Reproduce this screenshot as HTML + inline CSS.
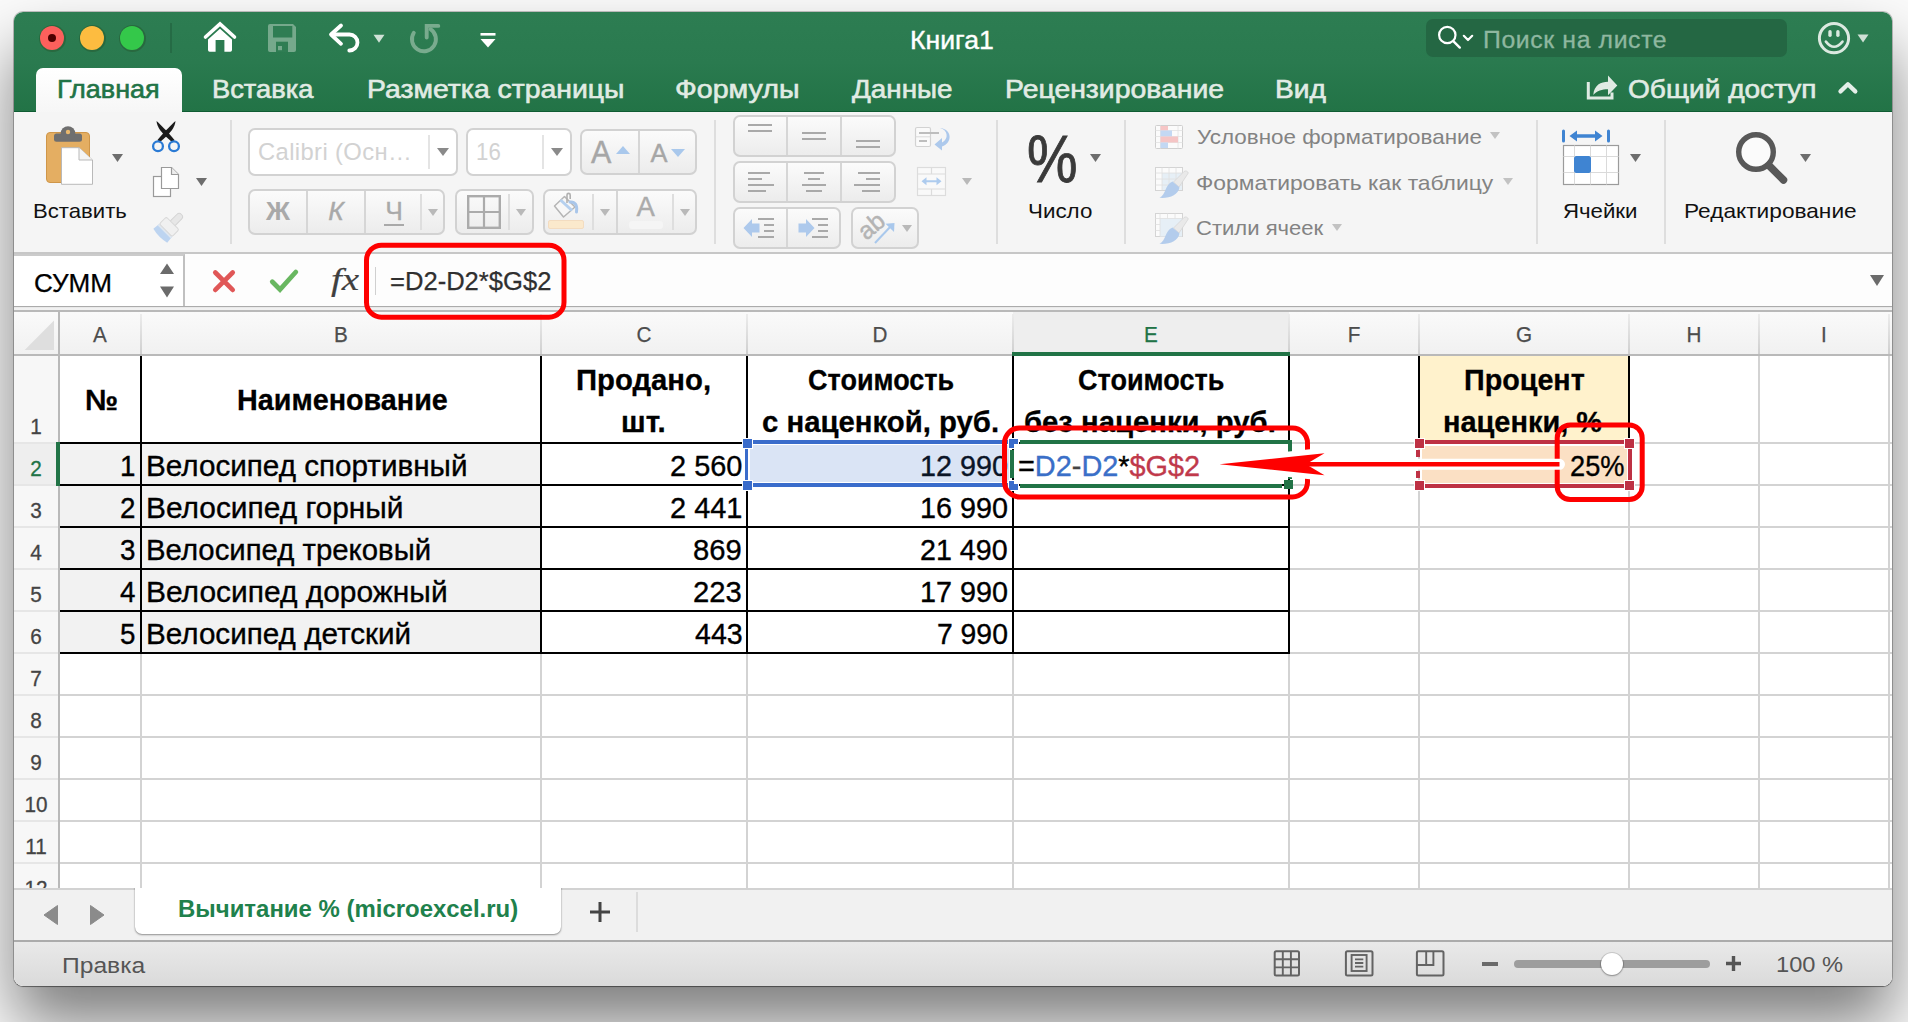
<!DOCTYPE html>
<html lang="ru">
<head>
<meta charset="utf-8">
<title>Книга1</title>
<style>
*{box-sizing:border-box;margin:0;padding:0}
html,body{width:1908px;height:1022px;overflow:hidden}
body{position:relative;background:#fbfbfb;font-family:"Liberation Sans",sans-serif;color:#000}
.a{position:absolute}
#win{position:absolute;left:14px;top:12px;width:1878px;height:974px;border-radius:9px;overflow:hidden;background:#fff}
#shadow{position:absolute;left:14px;top:12px;width:1878px;height:974px;border-radius:9px;
 box-shadow:0 0 0 1px rgba(0,0,0,.22),0 1px 1px 0 rgba(0,0,0,.3),0 38px 64px rgba(0,0,0,.5)}
#c{position:absolute;left:-14px;top:-12px;width:1908px;height:1022px}
.t{position:absolute;white-space:nowrap;line-height:1}
.sx{display:inline-block;white-space:nowrap;transform-origin:0 50%}
/* title */
#title{left:14px;top:12px;width:1878px;height:99px;background:linear-gradient(#2d7d52 0,#2a7a4f 50px,#227346 100px)}
.tab{font-size:26px;color:#e1ebe4;top:75.7px}
/* ribbon */
#ribbon{left:14px;top:112px;width:1878px;height:141px;background:#f5f5f5}
.vsep{position:absolute;width:2px;background:#dedede;top:120px;height:124px}
.box{position:absolute;border:2px solid #d2d2d2;border-radius:7px;background:linear-gradient(#fbfbfb,#ececec)}
.wbox{background:#fff}
.dv{position:absolute;width:2px;background:#d6d6d6}
.lbl{font-size:20.7px;top:201px;color:#111}
.dis{color:#838383;font-size:20.7px}
/* grid */
.hl{position:absolute;height:2px;background:#d3d3d3;left:60px;width:1832px}
.vl{position:absolute;width:2px;background:#d3d3d3;top:356px;height:532px}
.bh{position:absolute;height:2px;background:#000}
.bv{position:absolute;width:2px;background:#000}
.rn{position:absolute;left:14px;width:44px;transform:scaleX(.93);text-align:center;font-size:22.3px;color:#3c3c3c;line-height:1;-webkit-text-stroke:.3px currentColor}
.cn{position:absolute;transform:scaleX(.94);top:325px;font-size:22px;color:#4d4d4d;-webkit-text-stroke:.25px currentColor;line-height:1;text-align:center}
.cell{position:absolute;font-size:27px;line-height:1;white-space:nowrap}
.b{font-weight:bold}
.ct{-webkit-text-stroke:.35px currentColor;margin-top:.7px}
.tab{-webkit-text-stroke:.6px currentColor}
.hd{width:11px;height:11px;border:1px solid #fff;box-sizing:border-box}
</style>
</head>
<body>
<div id="shadow"></div>
<div id="win"><div id="c">

<!-- TITLEBAR -->
<div id="title" class="a"></div>
<!-- traffic lights -->
<div class="a" style="left:38.5px;top:24.5px;width:27px;height:27px;border-radius:50%;background:#28693f"></div>
<div class="a" style="left:40px;top:26px;width:24px;height:24px;border-radius:50%;background:#fc605c"></div>
<div class="a" style="left:48px;top:34px;width:8px;height:8px;border-radius:50%;background:#4d0000"></div>
<div class="a" style="left:78.5px;top:24.5px;width:27px;height:27px;border-radius:50%;background:#28693f"></div>
<div class="a" style="left:80px;top:26px;width:24px;height:24px;border-radius:50%;background:#fdbc40"></div>
<div class="a" style="left:118.5px;top:24.5px;width:27px;height:27px;border-radius:50%;background:#28693f"></div>
<div class="a" style="left:120px;top:26px;width:24px;height:24px;border-radius:50%;background:#34c84a"></div>
<div class="a" style="left:170px;top:23px;width:2px;height:30px;background:#256b45"></div>
<!-- home -->
<svg class="a" style="left:200px;top:18px" width="40" height="38" viewBox="0 0 40 38"><path d="M5.5 19 L20 6 L34.5 19" stroke="#fff" stroke-width="3.6" stroke-linecap="round" stroke-linejoin="miter" fill="none"/><path d="M8 21.5 L20 10.8 L32 21.5 V32 a1.7 1.7 0 0 1 -1.7 1.7 H24.4 V22 H15.6 V33.7 H9.7 a1.7 1.7 0 0 1 -1.7 -1.7 Z" fill="#fff"/></svg>
<!-- save -->
<svg class="a" style="left:266px;top:22px" width="32" height="32" viewBox="0 0 32 32"><path d="M4 2 H27 L30 5 V28 a2 2 0 0 1 -2 2 H4 a2 2 0 0 1 -2 -2 V4 a2 2 0 0 1 2 -2 Z" fill="#76a98c"/><rect x="7" y="4" width="19.3" height="11.5" fill="#2f7d53"/><rect x="10" y="19.7" width="12" height="10.3" fill="#2f7d53"/><rect x="12" y="24" width="4" height="4.2" fill="#76a98c"/></svg>
<!-- undo -->
<svg class="a" style="left:326px;top:20px" width="40" height="36" viewBox="0 0 40 36"><path d="M15 5.5 L5 14.5 L15 23.8" stroke="#fff" stroke-width="3.8" fill="none" stroke-linecap="round" stroke-linejoin="round"/><path d="M6 14.5 H23.5 a8 8 0 0 1 0 16 H23.3" stroke="#fff" stroke-width="3.8" fill="none" stroke-linecap="round"/></svg>
<svg class="a" style="left:373px;top:34px" width="12" height="9" viewBox="0 0 12 9"><path d="M0.5 0.8 H11.5 L6 8.8 Z" fill="#cfe1d6"/></svg>
<!-- redo -->
<svg class="a" style="left:406px;top:20px" width="38" height="36" viewBox="0 0 38 36"><path d="M7.8 12.8 A12 12 0 1 0 24.5 9.2" stroke="#79ab8e" stroke-width="3.9" fill="none" stroke-linecap="round"/><path d="M32.3 5.9 H20.7 V17.5" stroke="#79ab8e" stroke-width="3.9" fill="none" stroke-linecap="round" stroke-linejoin="miter"/></svg>
<!-- customize -->
<svg class="a" style="left:479px;top:31px" width="18" height="18" viewBox="0 0 18 18"><rect x="1.5" y="2" width="15" height="2.6" fill="#fff"/><path d="M1.5 8 H16.5 L9 16.5 Z" fill="#fff"/></svg>
<!-- title text -->
<div class="t" id="tt" style="left:909.75px;top:26.50px;font-size:26px;color:#fff;-webkit-text-stroke:.4px #fff"><span class="sx" style="transform:scaleX(1.0239)">Книга1</span></div>
<!-- search -->
<div class="a" style="left:1426px;top:19px;width:361px;height:38px;border-radius:7px;background:#246743"></div>
<svg class="a" style="left:1435px;top:24px" width="40" height="28" viewBox="0 0 40 28"><circle cx="12.300" cy="11" r="8.200" stroke="#fff" stroke-width="2.200" fill="none"/><path d="M18.300 17.200 L24.800 23.600" stroke="#fff" stroke-width="2.400" stroke-linecap="round"/><path d="M28.800 11.800 L33 16 L37.200 11.800" stroke="#fff" stroke-width="2.200" fill="none" stroke-linecap="round" stroke-linejoin="round"/></svg>
<div class="t" id="srch" style="left:1483.15px;top:29.01px;font-size:23.5px;color:#8fb7a0;letter-spacing:.6px;-webkit-text-stroke:.3px #8fb7a0"><span class="sx" style="transform:scaleX(1.0542)">Поиск на листе</span></div>
<!-- smiley -->
<svg class="a" style="left:1816px;top:20px" width="36" height="36" viewBox="0 0 36 36"><circle cx="18" cy="18.200" r="14.600" stroke="#dbe9e0" stroke-width="3" fill="none"/><rect x="12.300" y="10" width="3.400" height="7" rx="1.700" fill="#dbe9e0"/><rect x="20.200" y="10" width="3.400" height="7" rx="1.700" fill="#dbe9e0"/><path d="M9.900 21.600 Q18 32 26.500 21.600" stroke="#dbe9e0" stroke-width="2.600" fill="none" stroke-linecap="round"/></svg>
<svg class="a" style="left:1857px;top:34px" width="12" height="9" viewBox="0 0 12 9"><path d="M0.5 0.5 H11.5 L6 8.5 Z" fill="#cfe1d6"/></svg>
<!-- tabs -->
<div class="a" style="left:14px;top:110.5px;width:1878px;height:1.5px;background:#0f5c33"></div>
<div class="a" style="left:14px;top:112px;width:1878px;height:1.5px;background:#fff"></div>
<div class="a" style="left:36px;top:68px;width:146px;height:46px;border-radius:7px 7px 0 0;background:linear-gradient(#fff,#f6f6f6)"></div>
<div class="t tab" id="tab0" style="left:57.22px;color:#217346;top:75.71px"><span class="sx" style="transform:scaleX(1.0377)">Главная</span></div>
<div class="t tab" id="tab1" style="left:211.90px;top:75.71px"><span class="sx" style="transform:scaleX(1.0486)">Вставка</span></div>
<div class="t tab" id="tab2" style="left:366.82px;top:75.71px"><span class="sx" style="transform:scaleX(1.0918)">Разметка страницы</span></div>
<div class="t tab" id="tab3" style="left:675.10px;top:75.71px"><span class="sx" style="transform:scaleX(1.1000)">Формулы</span></div>
<div class="t tab" id="tab4" style="left:852.00px;top:75.71px"><span class="sx" style="transform:scaleX(1.0698)">Данные</span></div>
<div class="t tab" id="tab5" style="left:1004.62px;top:75.71px"><span class="sx" style="transform:scaleX(1.0913)">Рецензирование</span></div>
<div class="t tab" id="tab6" style="left:1274.83px;top:75.71px"><span class="sx" style="transform:scaleX(1.0855)">Вид</span></div>
<svg class="a" style="left:1584px;top:72px" width="36" height="32" viewBox="0 0 36 32"><path d="M4.300 10 V26 H28 V20.500" stroke="#dfeae3" stroke-width="3" fill="none"/><path d="M9.300 23 C10 13 17 9.800 24 9.800 V3.600 L33.300 13.600 L24 23.200 V17.200 C18 17.200 13 18.500 9.300 23 Z" fill="#dfeae3"/></svg>
<div class="t tab" id="tab7" style="left:1627.62px;top:75.71px"><span class="sx" style="transform:scaleX(1.0793)">Общий доступ</span></div>
<svg class="a" style="left:1836px;top:80px" width="26" height="16" viewBox="0 0 26 16"><path d="M4.500 11.400 L11.900 4.300 L19.300 11.400" stroke="#e4eee8" stroke-width="4.300" fill="none" stroke-linecap="round" stroke-linejoin="round"/></svg>

<!-- RIBBON -->
<div id="ribbon" class="a"></div>
<div class="a" style="left:14px;top:252px;width:1878px;height:2px;background:#c7c7c7"></div>
<!-- paste -->
<svg class="a" style="left:42px;top:122px" width="56" height="66" viewBox="0 0 56 66">
<rect x="4.5" y="10.5" width="43" height="50" rx="3.5" fill="#e4ae62" stroke="#cf9649" stroke-width="1"/>
<rect x="12" y="11.5" width="28" height="8.300" rx="2.500" fill="#6f6f6f"/><circle cx="26" cy="11.500" r="7.300" fill="#6f6f6f"/>
<circle cx="26" cy="10" r="2.200" fill="#e9b86d"/>
<path d="M19.5 25.7 H37 L50.5 38 V62.3 H19.5 Z" fill="#fff" stroke="#b9b9b9" stroke-width="1"/>
<path d="M37 25.7 V38 H50.5" fill="#f4f4f4" stroke="#b9b9b9" stroke-width="1"/>
</svg>
<svg class="a" style="left:111.5px;top:153.5px" width="11" height="8" viewBox="0 0 11 8"><path d="M0 0 H11 L5.5 8 Z" fill="#6d6d6d"/></svg>
<div class="t lbl" id="l_paste" style="left:32.83px;top:200.80px"><span class="sx" style="transform:scaleX(1.0697)">Вставить</span></div>
<!-- scissors -->
<svg class="a" style="left:148px;top:116px" width="36" height="40" viewBox="0 0 36 40">
<path d="M8.5 5 C9 11 13 17 24.5 26.5 L26.5 24 C19 15 13 9 8.5 5 Z" fill="#1b1b1b"/>
<path d="M27.5 5 C27 11 23 17 11.5 26.5 L9.5 24 C17 15 23 9 27.5 5 Z" fill="#1b1b1b"/>
<circle cx="10" cy="30.3" r="4.9" fill="none" stroke="#2a7ad4" stroke-width="2.3"/>
<circle cx="26" cy="30.3" r="4.9" fill="none" stroke="#2a7ad4" stroke-width="2.3"/>
</svg>
<!-- copy -->
<svg class="a" style="left:150px;top:164px" width="34" height="36" viewBox="0 0 34 36">
<rect x="3.500" y="12.500" width="17" height="20" fill="#fff" stroke="#9a9a9a" stroke-width="1.200"/>
<path d="M11.500 3.500 H21.500 L28.500 10.500 V24.500 H11.500 Z" fill="#fff" stroke="#9a9a9a" stroke-width="1.200"/>
<path d="M21.500 3.500 V10.500 H28.500" fill="#ededed" stroke="#9a9a9a" stroke-width="1.200"/>
</svg>
<svg class="a" style="left:195.5px;top:178.0px" width="11" height="8" viewBox="0 0 11 8"><path d="M0 0 H11 L5.5 8 Z" fill="#6d6d6d"/></svg>
<!-- format painter (disabled) -->
<svg class="a" style="left:146px;top:210px" width="40" height="36" viewBox="0 0 40 36"><g transform="translate(35.500,4.500) rotate(45)">
<rect x="-3.300" y="0" width="6.600" height="15" rx="3.300" fill="#e7e7e7" stroke="#d4d4d4" stroke-width="1"/>
<path d="M-9.800 30 L-9 22 H9 L9.800 30 Q0 32.500 -9.800 30 Z" fill="#bdd4f0"/>
<rect x="-9" y="21.500" width="18" height="3" fill="#dfe7f0"/>
<rect x="-9" y="12.500" width="18" height="9.800" rx="1.800" fill="#f0f0f0" stroke="#d8d8d8" stroke-width="1"/>
</g></svg>
<div class="vsep" style="left:230px"></div>
<!-- font name -->
<div class="box wbox" style="left:248px;top:128px;width:210px;height:48px"></div>
<div class="dv" style="left:428px;top:135px;height:34px;background:#e4e4e4"></div>
<svg class="a" style="left:437.0px;top:148.0px" width="12" height="8" viewBox="0 0 12 8"><path d="M0 0 H12 L6.0 8 Z" fill="#8a8a8a"/></svg>
<div class="t" id="fname" style="left:258.33px;top:139.81px;font-size:24.5px;color:#d2d2d2;letter-spacing:.4px"><span class="sx" style="transform:scaleX(0.9701)">Calibri (Осн…</span></div>
<!-- font size -->
<div class="box wbox" style="left:466px;top:128px;width:106px;height:48px"></div>
<div class="dv" style="left:542px;top:135px;height:34px;background:#e4e4e4"></div>
<svg class="a" style="left:551.0px;top:148.0px" width="12" height="8" viewBox="0 0 12 8"><path d="M0 0 H12 L6.0 8 Z" fill="#8a8a8a"/></svg>
<div class="t" id="fsize" style="left:476.09px;top:139.81px;font-size:24.5px;color:#d2d2d2"><span class="sx" style="transform:scaleX(0.9092)">16</span></div>
<!-- grow/shrink -->
<div class="box" style="left:580px;top:129px;width:117px;height:46px"></div>
<div class="dv" style="left:638px;top:131px;height:42px"></div>
<div class="t" style="left:591px;top:137px;font-size:30.5px;color:#a6a6a6;-webkit-text-stroke:.4px #a6a6a6"><span class="sx" style="transform:scaleX(1)">A</span></div>
<svg class="a" style="left:616px;top:146px" width="14" height="8" viewBox="0 0 14 8"><path d="M0 8 H14 L7 0 Z" fill="#a9c8ec"/></svg>
<div class="t" style="left:650.5px;top:141px;font-size:25.5px;color:#a6a6a6;-webkit-text-stroke:.4px #a6a6a6"><span class="sx" style="transform:scaleX(1)">A</span></div>
<svg class="a" style="left:671px;top:149px" width="14" height="8" viewBox="0 0 14 8"><path d="M0 0 H14 L7 8 Z" fill="#a9c8ec"/></svg>
<!-- B I U -->
<div class="box" style="left:248px;top:189px;width:197px;height:46px"></div>
<div class="dv" style="left:306px;top:191px;height:42px"></div>
<div class="dv" style="left:364px;top:191px;height:42px"></div>
<div class="dv" style="left:420px;top:194px;height:36px;background:#dedede"></div>
<div class="t b" id="bi_b" style="left:264px;top:198px;font-size:26.5px;color:#a9a9a9;width:28px;text-align:center"><span class="sx" style="transform:scaleX(1)">Ж</span></div>
<div class="t" id="bi_i" style="left:322px;top:198px;font-size:26.5px;color:#a9a9a9;-webkit-text-stroke:.4px #a9a9a9;width:28px;text-align:center;font-style:italic"><span class="sx" style="transform:scaleX(1)">К</span></div>
<div class="t" id="bi_u" style="left:380px;top:198px;font-size:26.5px;color:#a9a9a9;-webkit-text-stroke:.3px #a9a9a9;width:28px;text-align:center"><span class="sx" style="transform:scaleX(1)">Ч</span></div>
<div class="a" style="left:384px;top:224px;width:20px;height:2px;background:#a9a9a9"></div>
<svg class="a" style="left:428.0px;top:208.5px" width="10" height="7" viewBox="0 0 10 7"><path d="M0 0 H10 L5.0 7 Z" fill="#b9b9b9"/></svg>
<!-- borders -->
<div class="box" style="left:455px;top:189px;width:79px;height:46px"></div>
<svg class="a" style="left:466px;top:194px" width="36" height="36" viewBox="0 0 36 36"><rect x="2.2" y="2.2" width="31.6" height="31.6" fill="none" stroke="#ababab" stroke-width="2.4"/><path d="M18 2 V34 M2 18 H34" stroke="#ababab" stroke-width="2.2"/></svg>
<div class="dv" style="left:508px;top:194px;height:36px;background:#dedede"></div>
<svg class="a" style="left:516.0px;top:208.5px" width="10" height="7" viewBox="0 0 10 7"><path d="M0 0 H10 L5.0 7 Z" fill="#b9b9b9"/></svg>
<!-- fill & font color -->
<div class="box" style="left:543px;top:189px;width:154px;height:46px"></div>
<svg class="a" style="left:550px;top:190px" width="32" height="30" viewBox="0 0 32 30">
<path d="M14.5 6.5 L4.5 16 L13.5 27 L25 17 Z" fill="#f7f7f7" stroke="#b5b5b5" stroke-width="1.5" stroke-linejoin="round"/>
<path d="M10.5 10 L22 20.5" stroke="#b5d0ef" stroke-width="3"/>
<path d="M17 13 V5 a1.6 1.6 0 0 1 3.2 0 V9" stroke="#b0b0b0" stroke-width="1.6" fill="none"/>
<path d="M20 12 C25 11.5 27.5 15 26.5 22" stroke="#a9c6ea" stroke-width="3" fill="none" stroke-linecap="round"/>
</svg>
<div class="a" style="left:548px;top:220px;width:36px;height:9px;background:#fbe9cc;border:1px solid #f3dcc0;border-radius:2px"></div>
<div class="dv" style="left:592px;top:194px;height:36px;background:#dedede"></div>
<svg class="a" style="left:600.0px;top:208.5px" width="10" height="7" viewBox="0 0 10 7"><path d="M0 0 H10 L5.0 7 Z" fill="#b9b9b9"/></svg>
<div class="dv" style="left:616px;top:191px;height:42px"></div>
<div class="t" style="left:636.5px;top:193px;font-size:27.5px;color:#ababab;-webkit-text-stroke:.4px #ababab"><span class="sx" style="transform:scaleX(1)">A</span></div>
<div class="a" style="left:629px;top:221px;width:34px;height:8px;background:#f5f5f5;border-radius:3px"></div>
<div class="dv" style="left:672px;top:194px;height:36px;background:#dedede"></div>
<svg class="a" style="left:680.0px;top:208.5px" width="10" height="7" viewBox="0 0 10 7"><path d="M0 0 H10 L5.0 7 Z" fill="#b9b9b9"/></svg>
<div class="vsep" style="left:714px"></div>
<!-- alignment -->
<div class="box" style="left:733px;top:115px;width:163px;height:42px"></div>
<div class="dv" style="left:786px;top:117px;height:38px"></div>
<div class="dv" style="left:840px;top:117px;height:38px"></div>
<div class="a" style="left:748px;top:124px;width:24px;height:2px;background:#a9a9a9"></div><div class="a" style="left:748px;top:130px;width:24px;height:2px;background:#a9a9a9"></div><div class="a" style="left:802px;top:132px;width:24px;height:2px;background:#a9a9a9"></div><div class="a" style="left:802px;top:138px;width:24px;height:2px;background:#a9a9a9"></div><div class="a" style="left:856px;top:140px;width:24px;height:2px;background:#a9a9a9"></div><div class="a" style="left:856px;top:146px;width:24px;height:2px;background:#a9a9a9"></div>
<div class="box" style="left:733px;top:161px;width:163px;height:42px"></div>
<div class="dv" style="left:786px;top:163px;height:38px"></div>
<div class="dv" style="left:840px;top:163px;height:38px"></div>
<div class="a" style="left:748px;top:172px;width:22px;height:2px;background:#a9a9a9"></div><div class="a" style="left:748px;top:178px;width:14px;height:2px;background:#a9a9a9"></div><div class="a" style="left:748px;top:184px;width:26px;height:2px;background:#a9a9a9"></div><div class="a" style="left:748px;top:190px;width:18px;height:2px;background:#a9a9a9"></div><div class="a" style="left:804px;top:172px;width:20px;height:2px;background:#a9a9a9"></div><div class="a" style="left:808px;top:178px;width:12px;height:2px;background:#a9a9a9"></div><div class="a" style="left:802px;top:184px;width:24px;height:2px;background:#a9a9a9"></div><div class="a" style="left:806px;top:190px;width:16px;height:2px;background:#a9a9a9"></div><div class="a" style="left:858px;top:172px;width:22px;height:2px;background:#a9a9a9"></div><div class="a" style="left:866px;top:178px;width:14px;height:2px;background:#a9a9a9"></div><div class="a" style="left:854px;top:184px;width:26px;height:2px;background:#a9a9a9"></div><div class="a" style="left:862px;top:190px;width:18px;height:2px;background:#a9a9a9"></div>
<div class="box" style="left:733px;top:207px;width:108px;height:42px"></div>
<div class="dv" style="left:786px;top:209px;height:38px"></div>
<div class="a" style="left:758px;top:218px;width:16px;height:2px;background:#a9a9a9"></div><div class="a" style="left:764px;top:224px;width:10px;height:2px;background:#a9a9a9"></div><div class="a" style="left:764px;top:230px;width:10px;height:2px;background:#a9a9a9"></div><div class="a" style="left:758px;top:236px;width:16px;height:2px;background:#a9a9a9"></div><div class="a" style="left:812px;top:218px;width:16px;height:2px;background:#a9a9a9"></div><div class="a" style="left:818px;top:224px;width:10px;height:2px;background:#a9a9a9"></div><div class="a" style="left:818px;top:230px;width:10px;height:2px;background:#a9a9a9"></div><div class="a" style="left:812px;top:236px;width:16px;height:2px;background:#a9a9a9"></div>
<svg class="a" style="left:743px;top:218px" width="18" height="20" viewBox="0 0 18 20"><path d="M0.5 10 L9 1 V5.5 H16.5 V14.5 H9 V19 Z" fill="#adc9ec"/></svg>
<svg class="a" style="left:797px;top:218px" width="18" height="20" viewBox="0 0 18 20"><path d="M17.5 10 L9 1 V5.5 H1.5 V14.5 H9 V19 Z" fill="#adc9ec"/></svg>
<div class="box" style="left:851px;top:207px;width:68px;height:42px"></div>
<div class="t" style="left:858px;top:214px;font-size:24.5px;color:#b4b4b4;-webkit-text-stroke:.5px #b4b4b4;transform:rotate(-40deg);transform-origin:50% 50%"><span class="sx" style="transform:scaleX(1)">ab</span></div>
<svg class="a" style="left:872px;top:220px" width="26" height="26" viewBox="0 0 26 26"><path d="M3 23 L19 6" stroke="#a9c8ec" stroke-width="2" /><path d="M22.5 3 L22 12 L13.5 3.8 Z" fill="#a9c8ec"/></svg>
<svg class="a" style="left:902.0px;top:224.5px" width="10" height="7" viewBox="0 0 10 7"><path d="M0 0 H10 L5.0 7 Z" fill="#b9b9b9"/></svg>
<!-- wrap -->
<svg class="a" style="left:913px;top:125px" width="40" height="28" viewBox="0 0 40 28">
<rect x="2.500" y="2.500" width="15" height="19" rx="1.500" fill="#fafafa" stroke="#d2d2d2" stroke-width="1.200"/>
<path d="M2.500 11.800 H17.500" stroke="#dadada" stroke-width="1"/><path d="M6 8 H26 M6 16 H14" stroke="#bdbdbd" stroke-width="2"/>
<path d="M27 3 C35 5 36 14 29 17.5 L29 13 L21.5 19.5 L29 25.5 L29 21.5 C40 18 39 4 27 3 Z" fill="#adc9ec"/>
</svg>
<!-- merge -->
<svg class="a" style="left:915px;top:165px" width="34" height="34" viewBox="0 0 34 34">
<rect x="2.5" y="2.5" width="28" height="28" fill="#f9f9f9" stroke="#dcdcdc" stroke-width="1.2"/>
<path d="M2.5 9 H30.5 M2.5 24 H30.5 M16.5 2.5 V9 M16.5 24 V30.5" stroke="#dcdcdc" stroke-width="1.2"/>
<path d="M6.500 16.300 L11.500 12.300 V15.300 H21.500 V12.300 L26.500 16.300 L21.500 20.300 V17.300 H11.500 V20.300 Z" fill="#adcbee"/>
</svg>
<svg class="a" style="left:962.0px;top:178.0px" width="10" height="7" viewBox="0 0 10 7"><path d="M0 0 H10 L5.0 7 Z" fill="#b9b9b9"/></svg>
<div class="vsep" style="left:996px"></div>
<!-- number -->
<div class="t" id="pct" style="left:1026.5px;top:126px;font-size:66px;color:#3a3a3a;-webkit-text-stroke:.9px #3a3a3a"><span class="sx" style="transform:scaleX(.86);transform-origin:0 0">%</span></div>
<svg class="a" style="left:1089.5px;top:154.0px" width="11" height="8" viewBox="0 0 11 8"><path d="M0 0 H11 L5.5 8 Z" fill="#6d6d6d"/></svg>
<div class="t lbl" id="l_num" style="left:1027.92px;top:200.80px"><span class="sx" style="transform:scaleX(1.0812)">Число</span></div>
<div class="vsep" style="left:1124px"></div>
<!-- styles -->
<svg class="a" style="left:1154px;top:124px" width="30" height="26" viewBox="0 0 30 26">
<rect x="1.500" y="1.500" width="27" height="23" rx="1" fill="#fbfbfb" stroke="#cfcfcf" stroke-width="1"/>
<path d="M6.500 1.500 V24.500 M24 1.500 V24.500 M1.500 6.500 H28.500 M1.500 12.500 H28.500 M1.500 18.500 H28.500" stroke="#e2e2e2" stroke-width=".8"/>
<rect x="6.500" y="2" width="7.500" height="4.500" fill="#f7c6c6"/><rect x="6.500" y="6.500" width="11.500" height="6" fill="#c3d8f3"/><rect x="6.500" y="12.500" width="17.500" height="6" fill="#f5c5c5"/><rect x="6.500" y="18.500" width="7.500" height="5.500" fill="#c3d8f3"/>
</svg>
<div class="t dis" id="s1" style="left:1196.80px;top:126.91px"><span class="sx" style="transform:scaleX(1.0831)">Условное форматирование</span></div>
<svg class="a" style="left:1490.0px;top:131.5px" width="10" height="7" viewBox="0 0 10 7"><path d="M0 0 H10 L5.0 7 Z" fill="#c2c2c2"/></svg>
<svg class="a" style="left:1154px;top:166px" width="36" height="34" viewBox="0 0 36 34">
<rect x="1.5" y="1.5" width="27" height="23" fill="#fbfbfb" stroke="#d4d4d4" stroke-width="1"/>
<rect x="8" y="7" width="20" height="17" fill="#e6eff6"/>
<path d="M8 1.5 V24.5 M15 1.5 V24.5 M22 1.5 V24.5 M1.5 7 H28.5 M1.5 13 H28.5 M1.5 19 H28.5" stroke="#e0e0e0" stroke-width=".8"/>
<path d="M34.300 7 a2.800 2.800 0 0 0 -4.300 -1.500 L19.500 16 L25 21 Z" fill="#e9e9e9" stroke="#d6d6d6" stroke-width=".8"/>
<path d="M18.500 15.500 L25.500 21.500 C24 29 16 32.500 5.500 31.800 C12.500 28 10.500 19 18.500 15.500 Z" fill="#b3ccec"/>
</svg>
<div class="t dis" id="s2" style="left:1195.70px;top:172.61px"><span class="sx" style="transform:scaleX(1.1041)">Форматировать как таблицу</span></div>
<svg class="a" style="left:1502.5px;top:178.0px" width="10" height="7" viewBox="0 0 10 7"><path d="M0 0 H10 L5.0 7 Z" fill="#c2c2c2"/></svg>
<svg class="a" style="left:1154px;top:212px" width="36" height="34" viewBox="0 0 36 34">
<rect x="1.5" y="1.5" width="27" height="23" fill="#fbfbfb" stroke="#d4d4d4" stroke-width="1"/>
<rect x="6" y="6.5" width="22" height="18" fill="#e6eff6"/>
<path d="M6 1.5 V24.5 M1.5 6.5 H28.5 M13.5 1.5 V6.5 M21 1.5 V6.5 M1.5 12.5 H6 M1.5 18.5 H6" stroke="#e0e0e0" stroke-width=".8"/>
<path d="M34.300 7 a2.800 2.800 0 0 0 -4.300 -1.500 L19.500 16 L25 21 Z" fill="#e9e9e9" stroke="#d6d6d6" stroke-width=".8"/>
<path d="M18.500 15.500 L25.500 21.500 C24 29 16 32.500 5.500 31.800 C12.500 28 10.500 19 18.500 15.500 Z" fill="#b3ccec"/>
</svg>
<div class="t dis" id="s3" style="left:1195.73px;top:218.41px"><span class="sx" style="transform:scaleX(1.0659)">Стили ячеек</span></div>
<svg class="a" style="left:1332.0px;top:224.0px" width="10" height="7" viewBox="0 0 10 7"><path d="M0 0 H10 L5.0 7 Z" fill="#c2c2c2"/></svg>
<div class="vsep" style="left:1536px"></div>
<!-- cells -->
<svg class="a" style="left:1558px;top:126px" width="66" height="62" viewBox="0 0 66 62">
<rect x="5.5" y="19.5" width="55" height="39" fill="#fff" stroke="#9b9b9b" stroke-width="1.2"/>
<path d="M16.5 19.5 V58.5 M32.5 19.5 V58.5 M48.5 19.5 V58.5 M5.5 30.5 H60.500 M5.5 46.5 H60.5" stroke="#dadada" stroke-width="1"/>
<rect x="16" y="30" width="17" height="17" rx="2.5" fill="#3f84d2"/>
<path d="M5.5 5 V15 M50.5 5 V15" stroke="#3f84d2" stroke-width="3" stroke-linecap="round"/>
<path d="M11.500 10 L19 4.500 V8.300 H37 V4.500 L44.500 10 L37 15.500 V11.700 H19 V15.500 Z" fill="#3f84d2"/>
</svg>
<svg class="a" style="left:1629.5px;top:153.5px" width="11" height="8" viewBox="0 0 11 8"><path d="M0 0 H11 L5.5 8 Z" fill="#6d6d6d"/></svg>
<div class="t lbl" id="l_cells" style="left:1563.00px;top:200.80px"><span class="sx" style="transform:scaleX(1.0737)">Ячейки</span></div>
<div class="vsep" style="left:1664px"></div>
<!-- editing -->
<svg class="a" style="left:1730px;top:128px" width="62" height="60" viewBox="0 0 62 60"><circle cx="26" cy="24" r="17.3" fill="#fbfbfb" stroke="#585858" stroke-width="5.4"/><path d="M39 37.500 L53.500 52" stroke="#585858" stroke-width="7.5" stroke-linecap="round"/></svg>
<svg class="a" style="left:1799.5px;top:153.5px" width="11" height="8" viewBox="0 0 11 8"><path d="M0 0 H11 L5.5 8 Z" fill="#6d6d6d"/></svg>
<div class="t lbl" id="l_edit" style="left:1683.90px;top:200.80px"><span class="sx" style="transform:scaleX(1.0956)">Редактирование</span></div>

<!-- FORMULA BAR -->
<div class="a" style="left:14px;top:254px;width:1878px;height:52px;background:#fdfdfd"></div>
<div class="a" style="left:14px;top:254px;width:171px;height:52px;background:#fff;border-top:2px solid #cbcbcb;border-right:2px solid #c0c0c0"></div>
<div class="a" style="left:14px;top:306px;width:1878px;height:2px;background:linear-gradient(#ababab 0,#ababab 1.4px,#e9e9e9 1.4px)"></div>
<div class="a" style="left:14px;top:308px;width:1878px;height:2px;background:#f1f1f1"></div>
<div class="a" style="left:14px;top:310px;width:1878px;height:2px;background:#b9b9b9"></div>
<div class="t" id="nbox" style="left:33.76px;top:270.80px;font-size:25px;color:#000;-webkit-text-stroke:.25px #000"><span class="sx" style="transform:scaleX(1.0427)">СУММ</span></div>
<svg class="a" style="left:159px;top:262px" width="16" height="38" viewBox="0 0 16 38"><path d="M1 12 H15 L8 1.500 Z M1 24.500 H15 L8 35.500 Z" fill="#6b6b6b"/></svg>
<svg class="a" style="left:211px;top:268px" width="26" height="26" viewBox="0 0 26 26"><path d="M4.300 4.500 L21.700 21.900 M21.700 4.500 L4.300 21.900" stroke="#e05757" stroke-width="4.700" stroke-linecap="round"/></svg>
<svg class="a" style="left:268px;top:267px" width="32" height="28" viewBox="0 0 32 28"><path d="M4.300 14.800 L12 22.500 L27.800 5" stroke="#68b760" stroke-width="4.800" fill="none" stroke-linecap="round" stroke-linejoin="miter"/></svg>
<div class="t" id="fx" style="left:330.5px;top:262.5px;font-size:32.5px;font-family:'Liberation Serif',serif;font-style:italic;color:#3f3f3f;-webkit-text-stroke:.2px #3f3f3f"><span class="sx" style="transform:scaleX(1.2)">fx</span></div>
<div class="a" style="left:375px;top:267px;width:1px;height:28px;background:#d0d0d0"></div>
<div class="t" id="ftext" style="left:389.88px;top:268.71px;font-size:25px;color:#303030;-webkit-text-stroke:.25px #303030"><span class="sx" style="transform:scaleX(1.0230)">=D2-D2*$G$2</span></div>
<svg class="a" style="left:1870px;top:275px" width="14" height="12" viewBox="0 0 14 12"><path d="M0 0 H14 L7 11 Z" fill="#6b6b6b"/></svg>

<!-- GRID -->
<div class="a" style="left:14px;top:312px;width:1878px;height:42px;background:linear-gradient(#fafafa,#f1f1f1)"></div>
<div class="a" style="left:14px;top:354px;width:44px;height:534px;background:#f7f7f7"></div>
<div class="a" style="left:1013px;top:312px;width:276px;height:42px;background:#eeeeee"></div>
<div class="a" style="left:14px;top:442px;width:44px;height:2px;background:#e6e6e6"></div>
<div class="a" style="left:14px;top:484px;width:44px;height:2px;background:#e6e6e6"></div>
<div class="a" style="left:14px;top:526px;width:44px;height:2px;background:#e6e6e6"></div>
<div class="a" style="left:14px;top:568px;width:44px;height:2px;background:#e6e6e6"></div>
<div class="a" style="left:14px;top:610px;width:44px;height:2px;background:#e6e6e6"></div>
<div class="a" style="left:14px;top:652px;width:44px;height:2px;background:#e6e6e6"></div>
<div class="a" style="left:14px;top:694px;width:44px;height:2px;background:#e6e6e6"></div>
<div class="a" style="left:14px;top:736px;width:44px;height:2px;background:#e6e6e6"></div>
<div class="a" style="left:14px;top:778px;width:44px;height:2px;background:#e6e6e6"></div>
<div class="a" style="left:14px;top:820px;width:44px;height:2px;background:#e6e6e6"></div>
<div class="a" style="left:14px;top:862px;width:44px;height:2px;background:#e6e6e6"></div>
<svg class="a" style="left:24px;top:320px" width="32" height="32" viewBox="0 0 32 32"><path d="M30 0.5 V30 H0.7 Z" fill="#dedede"/></svg>
<div class="a" style="left:58px;top:314px;width:2px;height:40px;background:linear-gradient(#ececec,#cfcfcf)"></div>
<div class="a" style="left:140px;top:314px;width:2px;height:40px;background:linear-gradient(#ececec,#cfcfcf)"></div>
<div class="a" style="left:540px;top:314px;width:2px;height:40px;background:linear-gradient(#ececec,#cfcfcf)"></div>
<div class="a" style="left:746px;top:314px;width:2px;height:40px;background:linear-gradient(#ececec,#cfcfcf)"></div>
<div class="a" style="left:1012px;top:314px;width:2px;height:40px;background:linear-gradient(#ececec,#cfcfcf)"></div>
<div class="a" style="left:1288px;top:314px;width:2px;height:40px;background:linear-gradient(#ececec,#cfcfcf)"></div>
<div class="a" style="left:1418px;top:314px;width:2px;height:40px;background:linear-gradient(#ececec,#cfcfcf)"></div>
<div class="a" style="left:1628px;top:314px;width:2px;height:40px;background:linear-gradient(#ececec,#cfcfcf)"></div>
<div class="a" style="left:1758px;top:314px;width:2px;height:40px;background:linear-gradient(#ececec,#cfcfcf)"></div>
<div class="a" style="left:1888px;top:314px;width:2px;height:40px;background:linear-gradient(#ececec,#cfcfcf)"></div>
<div class="a" style="left:14px;top:354px;width:1878px;height:2px;background:#b9b9b9"></div>
<div class="a" style="left:58px;top:312px;width:2px;height:576px;background:#b9b9b9"></div>
<div class="a" style="left:1012px;top:352px;width:278px;height:4px;background:#217346"></div>
<div class="cn" id="cnA" style="top:323.81px;left:60px;width:80px;color:#4d4d4d">A</div>
<div class="cn" id="cnB" style="top:323.81px;left:142px;width:398px;color:#4d4d4d">B</div>
<div class="cn" id="cnC" style="top:323.81px;left:542px;width:204px;color:#4d4d4d">C</div>
<div class="cn" id="cnD" style="top:323.81px;left:748px;width:264px;color:#4d4d4d">D</div>
<div class="cn" id="cnE" style="top:323.81px;left:1014px;width:274px;color:#217346">E</div>
<div class="cn" id="cnF" style="top:323.81px;left:1290px;width:128px;color:#4d4d4d">F</div>
<div class="cn" id="cnG" style="top:323.81px;left:1420px;width:208px;color:#4d4d4d">G</div>
<div class="cn" id="cnH" style="top:323.81px;left:1630px;width:128px;color:#4d4d4d">H</div>
<div class="cn" id="cnI" style="top:323.81px;left:1760px;width:128px;color:#4d4d4d">I</div>
<div class="hl" style="top:442px"></div>
<div class="hl" style="top:484px"></div>
<div class="hl" style="top:526px"></div>
<div class="hl" style="top:568px"></div>
<div class="hl" style="top:610px"></div>
<div class="hl" style="top:652px"></div>
<div class="hl" style="top:694px"></div>
<div class="hl" style="top:736px"></div>
<div class="hl" style="top:778px"></div>
<div class="hl" style="top:820px"></div>
<div class="hl" style="top:862px"></div>
<div class="vl" style="left:140px"></div>
<div class="vl" style="left:540px"></div>
<div class="vl" style="left:746px"></div>
<div class="vl" style="left:1012px"></div>
<div class="vl" style="left:1288px"></div>
<div class="vl" style="left:1418px"></div>
<div class="vl" style="left:1628px"></div>
<div class="vl" style="left:1758px"></div>
<div class="vl" style="left:1888px"></div>
<div class="a" style="left:14px;top:444px;width:42px;height:40px;background:#eeeeee"></div>
<div class="rn" id="rn1" style="top:416.00px;color:#444">1</div>
<div class="rn" id="rn2" style="top:458.00px;color:#217346">2</div>
<div class="rn" id="rn3" style="top:500.00px;color:#444">3</div>
<div class="rn" id="rn4" style="top:542.00px;color:#444">4</div>
<div class="rn" id="rn5" style="top:584.00px;color:#444">5</div>
<div class="rn" id="rn6" style="top:626.00px;color:#444">6</div>
<div class="rn" id="rn7" style="top:668.00px;color:#444">7</div>
<div class="rn" id="rn8" style="top:710.00px;color:#444">8</div>
<div class="rn" id="rn9" style="top:752.00px;color:#444">9</div>
<div class="rn" id="rn10" style="top:794.00px;color:#444">10</div>
<div class="rn" id="rn11" style="top:836.00px;color:#444">11</div>
<div class="rn" id="rn12" style="top:878.00px;color:#444">12</div>
<div class="a" style="left:56px;top:442px;width:4px;height:44px;background:#217346"></div>
<div class="a" style="left:60px;top:444px;width:480px;height:208px;background:#f2f2f2"></div>
<div class="a" style="left:1420px;top:356px;width:208px;height:86px;background:#fff2cc"></div>
<div class="bh" style="left:60px;top:442px;width:1230px"></div>
<div class="bh" style="left:60px;top:484px;width:1230px"></div>
<div class="bh" style="left:60px;top:526px;width:1230px"></div>
<div class="bh" style="left:60px;top:568px;width:1230px"></div>
<div class="bh" style="left:60px;top:610px;width:1230px"></div>
<div class="bh" style="left:60px;top:652px;width:1230px"></div>
<div class="bv" style="left:140px;top:356px;height:298px"></div>
<div class="bv" style="left:540px;top:356px;height:298px"></div>
<div class="bv" style="left:746px;top:356px;height:298px"></div>
<div class="bv" style="left:1012px;top:356px;height:298px"></div>
<div class="bv" style="left:1288px;top:356px;height:298px"></div>
<div class="bv" style="left:1418px;top:356px;height:86px"></div>
<div class="bv" style="left:1628px;top:356px;height:86px"></div>
<!-- CELLS -->
<div class="t" id="h_a" style="left:84.57px;top:386.10px;font-size:29px;font-weight:bold;-webkit-text-stroke:.3px #000"><span class="sx" style="transform:scaleX(1.0267)">№</span></div>
<div class="t" id="h_b" style="left:236.61px;top:386.10px;font-size:29px;font-weight:bold;-webkit-text-stroke:.3px #000"><span class="sx" style="transform:scaleX(0.9909)">Наименование</span></div>
<div class="t" id="h_c1" style="left:575.99px;top:365.71px;font-size:29px;font-weight:bold;-webkit-text-stroke:.3px #000"><span class="sx" style="transform:scaleX(1.0102)">Продано,</span></div>
<div class="t" id="h_c2" style="left:621.36px;top:407.51px;font-size:29px;font-weight:bold;-webkit-text-stroke:.3px #000"><span class="sx" style="transform:scaleX(1.0190)">шт.</span></div>
<div class="t" id="h_d1" style="left:807.57px;top:365.71px;font-size:29px;font-weight:bold;-webkit-text-stroke:.3px #000"><span class="sx" style="transform:scaleX(0.9320)">Стоимость</span></div>
<div class="t" id="h_d2" style="left:761.99px;top:407.51px;font-size:29px;font-weight:bold;-webkit-text-stroke:.3px #000"><span class="sx" style="transform:scaleX(1.0109)">с наценкой, руб.</span></div>
<div class="t" id="h_e1" style="left:1078.07px;top:365.71px;font-size:29px;font-weight:bold;-webkit-text-stroke:.3px #000"><span class="sx" style="transform:scaleX(0.9327)">Стоимость</span></div>
<div class="t" id="h_e2" style="left:1023.99px;top:407.51px;font-size:29px;font-weight:bold;-webkit-text-stroke:.3px #000"><span class="sx" style="transform:scaleX(1.0091)">без наценки, руб.</span></div>
<div class="t" id="h_g1" style="left:1464.01px;top:365.80px;font-size:29px;font-weight:bold;-webkit-text-stroke:.3px #000"><span class="sx" style="transform:scaleX(0.9905)">Процент</span></div>
<div class="t" id="h_g2" style="left:1443.40px;top:407.60px;font-size:29px;font-weight:bold;-webkit-text-stroke:.3px #000"><span class="sx" style="transform:scaleX(0.9976)">наценки, %</span></div>
<div class="t ct" id="a2" style="left:120.34px;top:451.21px;font-size:29px;"><span class="sx" style="transform:scaleX(0.9571)">1</span></div>
<div class="t ct" id="b2" style="left:145.76px;top:451.21px;font-size:29px;"><span class="sx" style="transform:scaleX(1.0221)">Велосипед спортивный</span></div>
<div class="t ct" id="c2" style="left:669.80px;top:451.21px;font-size:29px;"><span class="sx" style="transform:scaleX(0.9980)">2 560</span></div>
<div class="t ct" id="d2" style="left:920.02px;top:451.21px;font-size:29px;"><span class="sx" style="transform:scaleX(0.9910)">12 990</span></div>
<div class="t ct" id="a3" style="left:120.34px;top:493.21px;font-size:29px;"><span class="sx" style="transform:scaleX(0.9571)">2</span></div>
<div class="t ct" id="b3" style="left:145.74px;top:493.21px;font-size:29px;"><span class="sx" style="transform:scaleX(1.0299)">Велосипед горный</span></div>
<div class="t ct" id="c3" style="left:669.80px;top:493.21px;font-size:29px;"><span class="sx" style="transform:scaleX(0.9980)">2 441</span></div>
<div class="t ct" id="d3" style="left:920.02px;top:493.21px;font-size:29px;"><span class="sx" style="transform:scaleX(0.9910)">16 990</span></div>
<div class="t ct" id="a4" style="left:120.34px;top:535.21px;font-size:29px;"><span class="sx" style="transform:scaleX(0.9571)">3</span></div>
<div class="t ct" id="b4" style="left:145.78px;top:535.21px;font-size:29px;"><span class="sx" style="transform:scaleX(1.0115)">Велосипед трековый</span></div>
<div class="t ct" id="c4" style="left:693.49px;top:535.21px;font-size:29px;"><span class="sx" style="transform:scaleX(1.0074)">869</span></div>
<div class="t ct" id="d4" style="left:920.31px;top:535.21px;font-size:29px;"><span class="sx" style="transform:scaleX(0.9876)">21 490</span></div>
<div class="t ct" id="a5" style="left:120.34px;top:577.21px;font-size:29px;"><span class="sx" style="transform:scaleX(0.9571)">4</span></div>
<div class="t ct" id="b5" style="left:145.74px;top:577.21px;font-size:29px;"><span class="sx" style="transform:scaleX(1.0322)">Велосипед дорожный</span></div>
<div class="t ct" id="c5" style="left:693.49px;top:577.21px;font-size:29px;"><span class="sx" style="transform:scaleX(1.0074)">223</span></div>
<div class="t ct" id="d5" style="left:920.02px;top:577.21px;font-size:29px;"><span class="sx" style="transform:scaleX(0.9910)">17 990</span></div>
<div class="t ct" id="a6" style="left:120.34px;top:619.21px;font-size:29px;"><span class="sx" style="transform:scaleX(0.9571)">5</span></div>
<div class="t ct" id="b6" style="left:145.76px;top:619.21px;font-size:29px;"><span class="sx" style="transform:scaleX(1.0219)">Велосипед детский</span></div>
<div class="t ct" id="c6" style="left:694.50px;top:619.21px;font-size:29px;"><span class="sx" style="transform:scaleX(0.9861)">443</span></div>
<div class="t ct" id="d6" style="left:937.02px;top:619.21px;font-size:29px;"><span class="sx" style="transform:scaleX(0.9767)">7 990</span></div>
<!-- D2 highlight -->
<div class="a" style="left:750px;top:445px;width:259px;height:38px;background:rgba(60,110,200,.19)"></div>
<div class="a" style="left:746px;top:440px;width:266px;height:4px;background:#3a6ccb"></div>
<div class="a" style="left:746px;top:483px;width:266px;height:4px;background:#3a6ccb"></div>
<div class="a" style="left:744.5px;top:446px;width:3.5px;height:36px;background:#3a6ccb"></div>
<div class="a" style="left:748px;top:444px;width:262px;height:1px;background:#fff"></div>
<div class="a" style="left:748px;top:482px;width:262px;height:1px;background:#fff"></div>
<div class="a" style="left:748px;top:444px;width:2px;height:39px;background:#fff"></div>
<div class="a hd" style="left:742px;top:437.5px;background:#3a6ccb"></div>
<div class="a hd" style="left:742px;top:479.5px;background:#3a6ccb"></div>
<div class="a hd" style="left:1007.5px;top:437.5px;background:#3a6ccb"></div>
<div class="a hd" style="left:1007.5px;top:479.5px;background:#3a6ccb"></div>
<!-- E2 edit box -->
<div class="a" style="left:1014px;top:444px;width:274px;height:40px;background:#fff"></div>
<div class="a" style="left:1020px;top:440px;width:272px;height:4px;background:#217346"></div>
<div class="a" style="left:1020px;top:484px;width:262px;height:4px;background:#217346"></div>
<div class="a" style="left:1010px;top:450px;width:3.5px;height:28px;background:#217346"></div>
<div class="a" style="left:1288px;top:440px;width:4px;height:14px;background:#217346"></div>
<div class="a" style="left:1288px;top:475px;width:4px;height:4px;background:#217346"></div>
<div class="a" style="left:1284px;top:480px;width:9px;height:9px;background:#217346"></div>

<div class="t ct" id="e2" style="left:1017.50px;top:451.21px;font-size:29px;"><span class="sx" style="transform:scaleX(0.9954)">=<span style="color:#3a6fc8">D2</span><span style="color:#444">-</span><span style="color:#3a6fc8">D2</span>*<span style="color:#c0394b">$G$2</span></span></div>
<!-- G2 highlight -->
<div class="a" style="left:1422px;top:445.5px;width:205px;height:37.5px;background:#fbe0c4"></div>
<div class="a" style="left:1418px;top:440px;width:212px;height:4px;background:#be3144"></div>
<div class="a" style="left:1418px;top:483.5px;width:212px;height:4px;background:#be3144"></div>
<div class="a" style="left:1628px;top:446px;width:4px;height:36px;background:#be3144"></div>
<div class="a" style="left:1416px;top:449.5px;width:4px;height:7px;background:#be3144"></div>
<div class="a" style="left:1416px;top:471px;width:4px;height:7px;background:#be3144"></div>
<div class="a hd" style="left:1414px;top:438px;background:#be3144"></div>
<div class="a hd" style="left:1414px;top:479.5px;background:#be3144"></div>
<div class="a hd" style="left:1624px;top:438px;background:#be3144"></div>
<div class="a hd" style="left:1624px;top:479.5px;background:#be3144"></div>

<div class="t ct" id="g2" style="left:1570.26px;top:451.21px;font-size:29px;"><span class="sx" style="transform:scaleX(0.9386)">25%</span></div>
<!-- ANNOT -->
<svg class="a" style="left:0;top:0" width="1908" height="1022" viewBox="0 0 1908 1022">
<rect x="366.500" y="245.200" width="197.500" height="72" rx="15" fill="none" stroke="#fe0000" stroke-width="5"/>
<rect x="1004.500" y="428" width="303" height="69" rx="15" fill="none" stroke="#fe0000" stroke-width="5"/>
<rect x="1557.200" y="425" width="85" height="74.500" rx="13" fill="none" stroke="#fe0000" stroke-width="5"/>
<path d="M1219.500 464.300 L1324.500 453.300 L1306 464.300 L1324.500 475.300 Z M1300 464.300 H1559.500" stroke="#fff" stroke-width="11" stroke-linejoin="round" stroke-linecap="round" fill="#fff"/>
<path d="M1219.500 464.300 L1324.500 453.300 L1306 464.300 L1324.500 475.300 Z" fill="#fe0000"/>
<path d="M1300 464.300 H1559.500" stroke="#fe0000" stroke-width="4.600"/>
</svg>

<!-- SHEET TABS / STATUS -->
<div class="a" style="left:14px;top:888px;width:1878px;height:53px;background:#f1f1f1;border-top:2px solid #d2d2d2"></div>
<div class="a" style="left:125px;top:888px;width:450px;height:52px;overflow:hidden"><div class="a" style="left:10px;top:-8px;width:426px;height:53.500px;background:#fff;border-radius:0 0 7px 7px;box-shadow:0 1px 2px rgba(0,0,0,.38),0 0 1px rgba(0,0,0,.35)"></div></div>
<svg class="a" style="left:42px;top:903px" width="66" height="24" viewBox="0 0 66 24"><path d="M2 12 L15.500 2.500 V21.500 Z M62 12 L48.500 2.500 V21.500 Z" fill="#8b8b8b" stroke="#8b8b8b" stroke-width="1" stroke-linejoin="round"/></svg>
<div class="t" id="sheet" style="left:178.39px;top:898.21px;font-size:23.7px;font-weight:bold;color:#20814c"><span class="sx" style="transform:scaleX(1.0107)">Вычитание % (microexcel.ru)</span></div>
<svg class="a" style="left:588px;top:900px" width="24" height="24" viewBox="0 0 24 24"><path d="M12 2 V22 M2 12 H22" stroke="#444" stroke-width="3"/></svg>
<div class="a" style="left:636px;top:892px;width:2px;height:40px;background:#dcdcdc"></div>
<div class="a" style="left:14px;top:940px;width:1878px;height:46px;background:linear-gradient(#e9e9e9,#dadada);border-top:2px solid #ababab"></div>
<div class="t" id="st_mode" style="left:62.18px;top:954.71px;font-size:22px;color:#555"><span class="sx" style="transform:scaleX(1.1191)">Правка</span></div>
<svg class="a" style="left:1272px;top:949px" width="30" height="29" viewBox="0 0 30 29"><rect x="2.700" y="2.200" width="24.300" height="24.300" rx="1.500" fill="none" stroke="#636363" stroke-width="2"/><path d="M10.800 2 V26.500 M18.900 2 V26.500 M2.500 10.300 H27 M2.500 18.400 H27" stroke="#636363" stroke-width="1.900"/></svg>
<svg class="a" style="left:1343px;top:949px" width="32" height="29" viewBox="0 0 32 29"><rect x="2.900" y="2.200" width="26.600" height="24.300" rx="1.500" fill="none" stroke="#636363" stroke-width="2"/><rect x="8.600" y="6" width="15" height="16" fill="none" stroke="#636363" stroke-width="1.900"/><path d="M12 10.300 H20.300 M12 14 H20.300 M12 17.700 H20.300" stroke="#636363" stroke-width="1.800"/></svg>
<svg class="a" style="left:1414px;top:949px" width="32" height="29" viewBox="0 0 32 29"><rect x="2.900" y="2.200" width="26.600" height="24.300" rx="1.500" fill="none" stroke="#636363" stroke-width="2"/><path d="M12.200 2 V16 M19.400 2 V16 H2.900" stroke="#636363" stroke-width="1.900" fill="none"/></svg>
<div class="a" style="left:1482px;top:962px;width:16px;height:3.500px;background:#6a6a6a"></div>
<div class="a" style="left:1514px;top:959.500px;width:196px;height:8px;border-radius:4px;background:#9d9d9d"></div>
<div class="a" style="left:1600.500px;top:952.500px;width:22px;height:22px;border-radius:50%;background:#fff;box-shadow:0 0 0 1px rgba(0,0,0,.12),0 1px 2px rgba(0,0,0,.3)"></div>
<svg class="a" style="left:1725px;top:955px" width="17" height="17" viewBox="0 0 17 17"><path d="M8.500 1 V16 M1 8.500 H16" stroke="#555" stroke-width="3.400"/></svg>
<div class="t" id="zoom" style="left:1775.65px;top:954.30px;font-size:22.5px;color:#555"><span class="sx" style="transform:scaleX(1.0511)">100 %</span></div>

</div></div>
</body>
</html>
